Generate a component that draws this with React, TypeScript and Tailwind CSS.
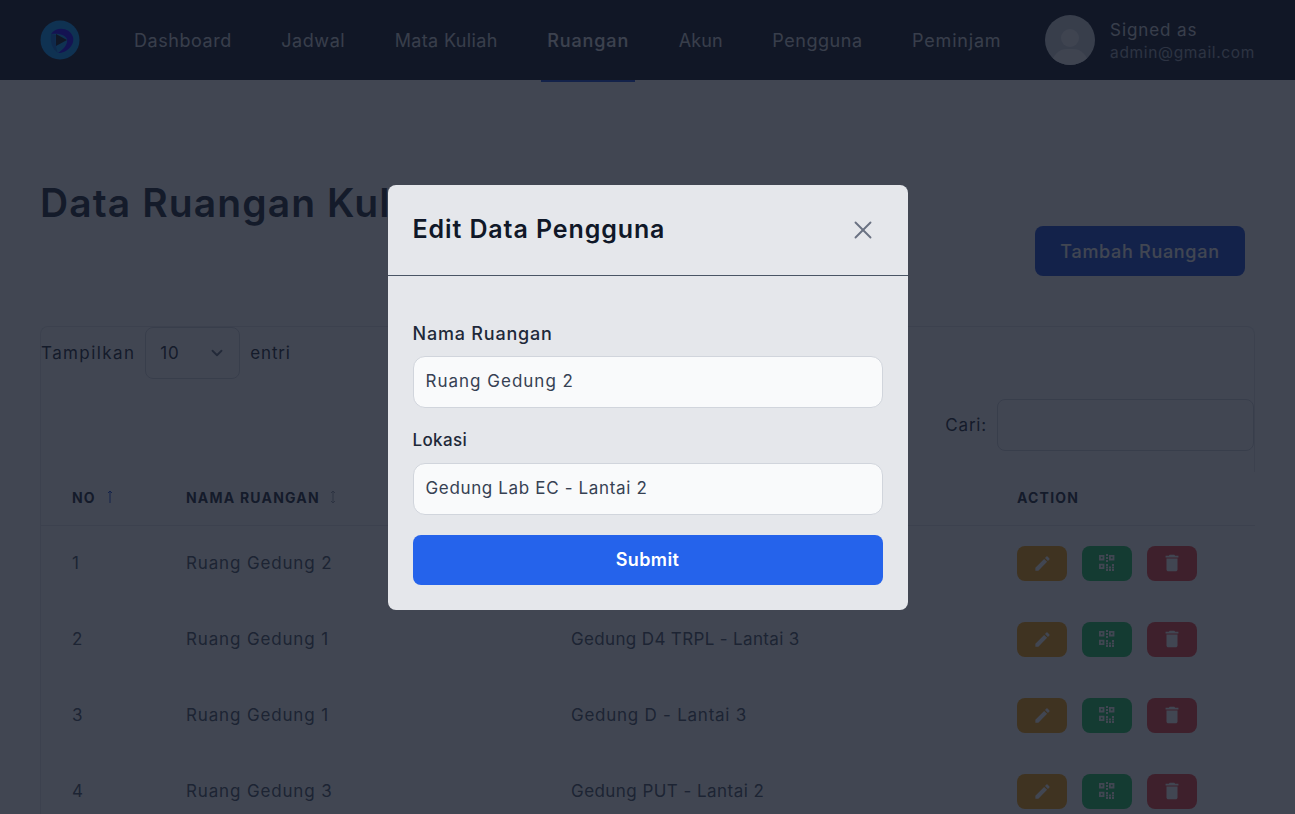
import { X, ChevronDown } from "lucide-react";
import { MdEdit, MdDelete } from "react-icons/md";

const navItems = [
  { label: "Dashboard", track: "tracking-[0.55px] text-gray-300" },
  { label: "Jadwal", track: "tracking-[0.55px] text-gray-300" },
  { label: "Mata Kuliah", track: "tracking-[0.35px] text-gray-300" },
  { label: "Ruangan", active: true, track: "font-medium tracking-[0.9px] text-gray-200" },
  { label: "Akun", track: "tracking-[0.1px] text-gray-300" },
  { label: "Pengguna", track: "tracking-[0.55px] text-gray-300" },
  { label: "Peminjam", track: "tracking-[0.8px] text-gray-300" },
];

const rooms = [
  { no: 1, name: "Ruang Gedung 2", lokasi: "Gedung Lab EC - Lantai 2", track: "tracking-[0.65px]" },
  { no: 2, name: "Ruang Gedung 1", lokasi: "Gedung D4 TRPL - Lantai 3", track: "tracking-[0.35px]" },
  { no: 3, name: "Ruang Gedung 1", lokasi: "Gedung D - Lantai 3", track: "tracking-[0.75px]" },
  { no: 4, name: "Ruang Gedung 3", lokasi: "Gedung PUT - Lantai 2", track: "tracking-[0.45px]" },
];

const colTemplate = "grid grid-cols-[114px_385px_446px_1fr] pl-[31px]";

export default function App() {
  return (
    <div className="relative h-screen overflow-hidden bg-white font-['Inter',sans-serif] text-gray-900">
      {/* Navbar */}
      <nav className="flex h-20 items-center bg-[#111827] pl-10 pr-10">
        <Logo />
        <ul className="ml-[54px] flex gap-[49.5px]">
          {navItems.map((item) => (
            <li key={item.label} className="relative">
              <span className={`text-[18px] ${item.track}`}>{item.label}</span>
              {item.active && <span className="absolute left-[-6px] right-[-6px] top-[53px] h-0.5 bg-[#1d4ed8]" />}
            </li>
          ))}
        </ul>
        <div className="ml-auto flex items-center gap-[15px]">
          <div className="relative h-[50px] w-[50px] overflow-hidden rounded-full bg-gray-300">
            <div className="mx-auto mt-[14px] h-[18px] w-[18px] rounded-full bg-gray-100" />
            <div className="mx-auto mt-[2px] h-[30px] w-[36px] rounded-full bg-gray-100" />
          </div>
          <div>
            <p className="text-[17px] leading-[25px] tracking-[0.9px] text-gray-300">Signed as</p>
            <p className="text-[15.5px] leading-[20px] tracking-[0.65px] text-gray-400">admin@gmail.com</p>
          </div>
        </div>
      </nav>

      {/* Page */}
      <main className="pl-10 pr-10 pt-[103px]">
        <div className="flex justify-between pr-[10px]">
          <h1 className="text-[39px] font-semibold leading-10 tracking-[1.1px] text-gray-800">Data Ruangan Kuliah</h1>
          <button className="mt-[43px] h-[50px] w-[210px] rounded-lg bg-[#1d4ed8] text-[18px] font-medium tracking-[0.7px] text-white">
            Tambah Ruangan
          </button>
        </div>

        <section className="mt-[50px] rounded-t-lg border-l border-t border-gray-200">
          <div className="rounded-tr-lg border-r border-gray-200">
            <div className="flex items-center gap-[10px] text-[17px] text-gray-800">
              <span className="pt-[2px] tracking-[1.4px]">Tampilkan</span>
              <div className="flex h-[52px] w-[95px] items-center justify-between rounded-lg border border-gray-300 pl-[14px] pr-[13px]">
                <span className="pt-[2px] tracking-[0.8px]">10</span>
                <ChevronDown size={18} className="text-gray-500" strokeWidth={2.5} />
              </div>
              <span className="pt-[2px] tracking-[0.8px]">entri</span>
            </div>
            <div className="mt-[20px] flex items-center justify-end gap-[10px] pb-[21px] text-[17px] text-gray-800">
              <span className="pt-[2px] tracking-[0.8px]">Cari:</span>
              <div className="h-[52px] w-[257px] rounded-lg border border-gray-300" />
            </div>
          </div>

          <div className={`${colTemplate} h-[54px] items-center border-b border-gray-200 pb-[3px] text-[14px] font-bold uppercase tracking-[1.2px] text-gray-800`}>
            <span className="flex items-center gap-[10px]">
              NO <SortArrow up className="text-[#1d4ed8]" />
            </span>
            <span className="flex items-center gap-[9px]">
              NAMA RUANGAN <SortArrow className="text-gray-400" />
            </span>
            <span>LOKASI</span>
            <span>ACTION</span>
          </div>

          {rooms.map((room) => (
            <div key={room.no} className={`${colTemplate} h-[76px] items-center text-[17px] text-gray-600`}>
              <span>{room.no}</span>
              <span className="tracking-[0.85px]">{room.name}</span>
              <span className={room.track}>{room.lokasi}</span>
              <div className="flex gap-[15px] pb-[2px]">
                <button className="flex h-[35px] w-[50px] items-center justify-center rounded-lg bg-[#f59e0b] text-white">
                  <MdEdit size={19} />
                </button>
                <button className="flex h-[35px] w-[50px] items-center justify-center rounded-lg bg-[#22c55e] text-white">
                  <QrIcon />
                </button>
                <button className="flex h-[35px] w-[50px] items-center justify-center rounded-lg bg-[#ef4444] text-white">
                  <MdDelete size={22} />
                </button>
              </div>
            </div>
          ))}
        </section>
      </main>

      {/* Modal */}
      <div className="absolute inset-0 flex items-start justify-center bg-[#111827]/80 pt-[185px]">
        <div className="w-[520px] rounded-lg bg-[#e5e7eb]">
          <div className="flex h-[91px] items-center justify-between border-b border-gray-600 pl-[25px] pr-[30px]">
            <h2 className="text-[25px] font-semibold tracking-[0.9px] text-gray-900">Edit Data Pengguna</h2>
            <X size={30} strokeWidth={1.5} className="text-gray-500" />
          </div>
          <form className="px-[25px] pb-[25px] pt-[45px]">
            <label className="block text-[18px] font-medium leading-[25px] tracking-[0.8px] text-gray-800">Nama Ruangan</label>
            <div className="mt-[10px] flex h-[52px] items-center rounded-xl border border-gray-300 bg-gray-50 px-3 text-[17px] tracking-[1px] text-gray-700">
              Ruang Gedung 2
            </div>
            <label className="mt-[20px] block text-[17px] font-medium leading-[25px] tracking-[0.35px] text-gray-800">Lokasi</label>
            <div className="mt-[10px] flex h-[52px] items-center rounded-xl border border-gray-300 bg-gray-50 px-3 text-[17px] tracking-[0.65px] text-gray-700">
              Gedung Lab EC - Lantai 2
            </div>
            <button type="button" className="mt-[20px] h-[50px] w-full rounded-lg bg-[#2563eb] pb-[2px] text-[18px] font-semibold tracking-[0.4px] text-white">
              Submit
            </button>
          </form>
        </div>
      </div>
    </div>
  );
}

function Logo() {
  return (
    <svg width="40" height="40" viewBox="0 0 40 40" className="shrink-0">
      <circle cx="20" cy="20" r="19.5" fill="#0799ff" />
      <path d="M11 14 C16 6 30 7 33 17 C35 25 27 33 18 33 C24 29 28 24 27 19 C25 14 17 13 11 14 Z" fill="#2000ff" />
      <path d="M11 14 C10 22 12 29 18 33 C16 29 15 20 16 15 Z" fill="#0570e0" />
      <path d="M16 14 L27 20 L16 26 Z" fill="#111827" />
    </svg>
  );
}

function SortArrow({ up, className }: { up?: boolean; className?: string }) {
  return (
    <svg width="8" height="14" viewBox="0 0 8 14" fill="none" stroke="currentColor" strokeWidth="1" className={className}>
      <path d="M4 1 V13" />
      <path d="M2 3 L4 1 L6 3" />
      {!up && <path d="M2 11 L4 13 L6 11" />}
    </svg>
  );
}

function QrIcon() {
  const dots = [
    [8, 0], [8, 3], [8, 6],
    [8, 10], [14, 10],
    [8, 12.5], [11, 12.5], [14, 12.5],
    [8, 15], [11, 15], [14, 15],
  ];
  return (
    <svg width="18" height="18" viewBox="0 0 18 18" fill="currentColor">
      <path fillRule="evenodd" d="M1 1h5.4v5.4H1z M2.8 2.8v1.8h1.8V2.8z" />
      <path fillRule="evenodd" d="M11 1h5.4v5.4H11z M12.8 2.8v1.8h1.8V2.8z" />
      <path fillRule="evenodd" d="M1 9.7h5.4v5.4H1z M2.8 11.5v1.8h1.8v-1.8z" />
      {dots.map(([x, y]) => (
        <rect key={`${x}-${y}`} x={x} y={y} width="2" height="2" />
      ))}
    </svg>
  );
}
